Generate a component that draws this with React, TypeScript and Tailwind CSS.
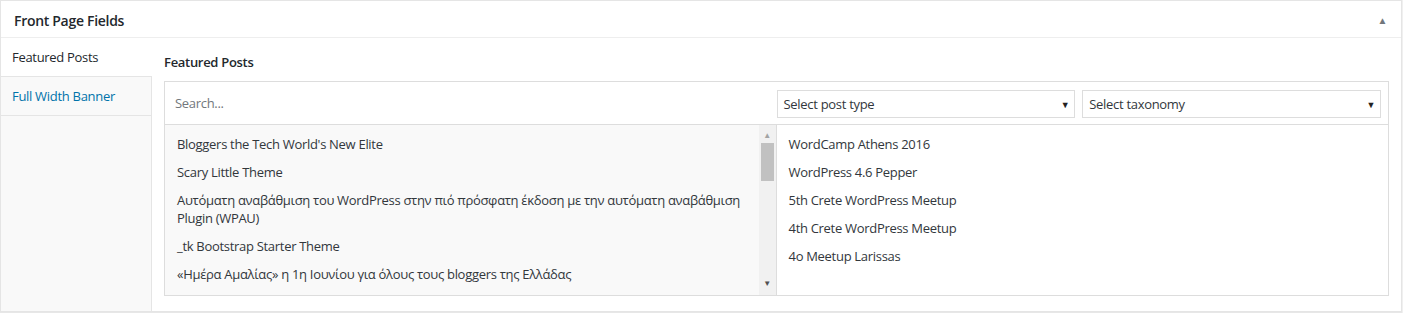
import React from "react";

const choices = [
  "Bloggers the Tech World's New Elite",
  "Scary Little Theme",
  "Αυτόματη αναβάθμιση του WordPress στην πιό πρόσφατη έκδοση με την αυτόματη αναβάθμιση Plugin (WPAU)",
  "_tk Bootstrap Starter Theme",
  "«Ημέρα Αμαλίας» η 1η Ιουνίου για όλους τους bloggers της Ελλάδας",
];

const values = [
  "WordCamp Athens 2016",
  "WordPress 4.6 Pepper",
  "5th Crete WordPress Meetup",
  "4th Crete WordPress Meetup",
  "4o Meetup Larissas",
];

function FakeSelect({ label }: { label: string }) {
  return (
    <div className="flex h-[28px] items-center justify-between border border-[#ddd] bg-white pl-[6px] pr-[5px] pt-[1px] text-[13px] text-[#32373c]">
      <span>{label}</span>
      <span className="text-[9px] leading-none text-[#222]">▼</span>
    </div>
  );
}

export default function App() {
  return (
    <div
      className="h-[313px] w-[1403px] bg-[#f1f1f1] tracking-[-0.3px]"
      style={{ fontFamily: '"Open Sans", "Noto Sans", sans-serif' }}
    >
      <div className="flex h-[312px] w-[1402px] flex-col border border-[#e5e5e5] bg-white shadow-[0_1px_1px_rgba(0,0,0,0.04)]">
        {/* header */}
        <div className="flex h-[37px] flex-none items-center justify-between border-b border-[#eee] pl-[13px] pr-[14px] pt-[2px]">
          <h2 className="text-[14px] font-semibold text-[#23282d]">Front Page Fields</h2>
          <span className="text-[10px] leading-none text-[#72777c]">▲</span>
        </div>

        <div className="flex min-h-0 flex-1">
          {/* tabs */}
          <div className="flex w-[151px] flex-none flex-col bg-[#f9f9f9]">
            <div className="flex h-[39px] items-center border-b border-[#e5e5e5] bg-white pl-[11px] pt-[2px] text-[13px] text-[#23282d]">
              Featured Posts
            </div>
            <div className="flex h-[39px] items-center border-r border-b border-[#e5e5e5] pl-[11px] pt-[2px] text-[13px] text-[#0073aa]">
              Full Width Banner
            </div>
            <div className="flex-1 border-r border-[#e5e5e5]" />
          </div>

          {/* field */}
          <div className="flex flex-1 flex-col pl-[12px] pr-[12px] pt-[15px] pb-[15px]">
            <label className="mb-[10px] text-[13px] font-semibold leading-[18px] text-[#23282d]">
              Featured Posts
            </label>
            <div className="flex flex-1 flex-col border border-[#ddd]">
              <div className="flex h-[43px] flex-none border-b border-[#ddd]">
                <div className="flex w-1/2 items-center pl-[10px] pt-[2px] text-[13px] text-[#72777c]">Search...</div>
                <div className="grid w-1/2 grid-cols-2 pt-[8px]">
                  <div className="pr-[7px]">
                    <FakeSelect label="Select post type" />
                  </div>
                  <div className="pr-[7px]">
                    <FakeSelect label="Select taxonomy" />
                  </div>
                </div>
              </div>
              <div className="flex min-h-0 flex-1">
                <div className="flex w-1/2 border-r border-[#ddd] bg-[#f9f9f9]">
                  <ul className="flex-1 px-[5px] pt-[5px]">
                    {choices.map((c) => (
                      <li key={c} className="px-[7px] py-[5px] text-[13px] leading-[18px] text-[#32373c]">
                        {c}
                      </li>
                    ))}
                  </ul>
                  <div className="flex w-[17px] flex-none flex-col items-center bg-[#f1f1f1] pb-[6px] pt-[4px]">
                    <span className="text-[8px] leading-[12px] text-[#a3a3a3]">▲</span>
                    <div className="mt-[2px] h-[38px] w-[13px] bg-[#c1c1c1]" />
                    <div className="flex-1" />
                    <span className="text-[8px] leading-[12px] text-[#505050]">▼</span>
                  </div>
                </div>
                <ul className="w-1/2 px-[5px] pt-[5px]">
                  {values.map((v) => (
                    <li key={v} className="px-[7px] py-[5px] text-[13px] leading-[18px] text-[#32373c]">
                      {v}
                    </li>
                  ))}
                </ul>
              </div>
            </div>
          </div>
        </div>
      </div>
    </div>
  );
}
